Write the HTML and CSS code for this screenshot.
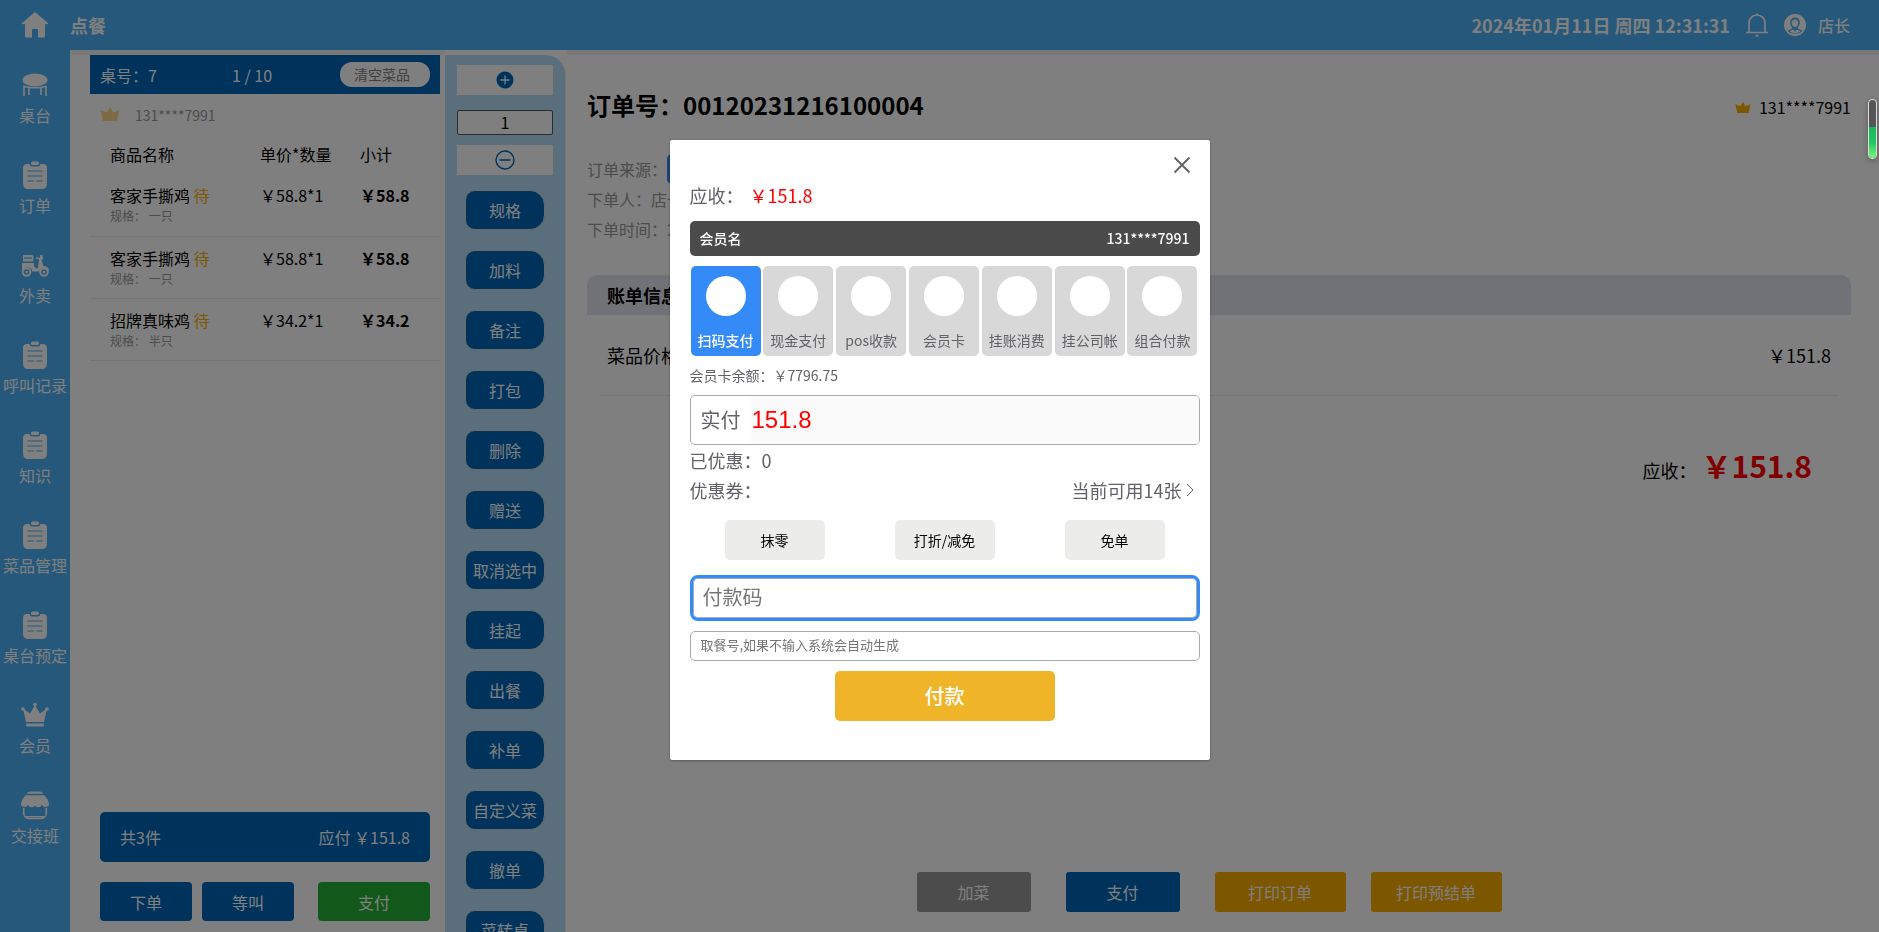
FILE: index.html
```html
<!DOCTYPE html>
<html lang="zh-CN">
<head>
<meta charset="utf-8">
<title>点餐</title>
<link rel="stylesheet" href="styles.css">
</head>
<body>
<svg class="defs" aria-hidden="true">
  <symbol id="i-clip" viewBox="0 0 30 30">
    <path fill="currentColor" d="M7 4h2.500q.5 2.500 2.500 2.500h6q2 0 2.500-2.500H23q4 0 4 4v15q0 6-5 6H8q-5 0-5-6V8q0-4 4-4z"/>
    <rect x="11" y="1.500" width="8" height="3.500" rx="1.500" fill="currentColor"/>
    <path class="cut" d="M7.500 11h15M7.500 16h15M7.500 21h6.500M16.500 21h6"/>
  </symbol>
  <symbol id="i-crown" viewBox="0 0 20 14">
    <path fill="currentColor" d="M10 0l3.200 5.500L19.500 3 17 14H3L.5 3l6.300 2.500z"/>
  </symbol>
</svg>

<div class="app">
  <header class="topbar">
    <a class="home" href="#" aria-label="首页"><svg width="28" height="28" viewBox="0 0 28 28"><path fill="currentColor" d="M14 1L.5 12.500q.5 1 3.500.5v12q0 1.500 1.500 1.500H11v-7.500q0-1 1-1h4q1 0 1 1v7.500h5.500q1.500 0 1.500-1.500V13q3 .5 3.500-.5z"/></svg></a>
    <h1 class="topbar-title">点餐</h1>
    <div class="topbar-right">
      <time class="clock">2024年01月11日 周四 12:31:31</time>
      <svg class="bell" width="24" height="24" viewBox="0 0 24 24" fill="none" stroke="currentColor" stroke-width="1.700"><path d="M4 19.500V10a8 8 0 0 1 16 0v9.500M1 19.500h22M12 2.500V.5"/><path d="M10.500 22.700h3"/></svg>
      <a class="user" href="#"><svg width="22" height="22" viewBox="0 0 22 22"><circle cx="11" cy="11" r="11" fill="currentColor"/><path class="cut-fill" d="M11 3.500c3 0 4.800 2 4.800 5 0 2-.8 3.700-2 4.700l.2 1.300 4.500 2.300c-3 4-12 4-15 0L8 14.500l.2-1.300c-1.200-1-2-2.700-2-4.700 0-3 1.800-5 4.800-5z"/><path fill="currentColor" d="M11 5.500c2.200 0 3.300 1.400 3.300 3.300 0 2.200-1.400 4.400-3.300 4.400s-3.300-2.200-3.300-4.400c0-1.900 1.100-3.300 3.300-3.300zM5.500 17l4-1.500.7 2.500.8-2.500.8 2.500.7-2.500 4 1.500c-2 2.800-9 2.800-11 0z"/></svg>店长</a>
    </div>
  </header>

  <nav class="sidebar">
    <a class="nav-item" href="#"><svg width="30" height="30" viewBox="0 0 30 30"><ellipse cx="15" cy="10" rx="12.500" ry="6.500" fill="currentColor"/><path fill="none" stroke="currentColor" stroke-width="1.600" d="M4 15.500V26M9 18v7M21 18v7M26 15.500V26M4 16.500q11 2.500 22 0"/></svg>桌台</a>
    <a class="nav-item" href="#"><svg width="30" height="30"><use href="#i-clip"/></svg>订单</a>
    <a class="nav-item" href="#"><svg width="30" height="30" viewBox="0 0 30 30"><path fill="currentColor" d="M3 5h9q1.500 0 1.500 1.500V10q0 1.500-1.500 1.500H3zM2 13h12v3q1 3 4 2l1-9h-3V7.500h4V5h2.500l.5 4-1.500 1 2 6q5 0 5.500 4.500h-2.200a4.500 4.500 0 0 0-8 1h-6.500a4.500 4.500 0 0 0-8.300-2H2z"/><path class="cut" d="M4 8h8"/><circle cx="6.500" cy="22" r="3.800" fill="none" stroke="currentColor" stroke-width="2"/><circle cx="24" cy="22" r="3.800" fill="none" stroke="currentColor" stroke-width="2"/><circle cx="6.500" cy="22" r="1.300" fill="currentColor"/><circle cx="24" cy="22" r="1.300" fill="currentColor"/></svg>外卖</a>
    <a class="nav-item" href="#"><svg width="30" height="30"><use href="#i-clip"/></svg>呼叫记录</a>
    <a class="nav-item" href="#"><svg width="30" height="30"><use href="#i-clip"/></svg>知识</a>
    <a class="nav-item" href="#"><svg width="30" height="30"><use href="#i-clip"/></svg>菜品管理</a>
    <a class="nav-item" href="#"><svg width="30" height="30"><use href="#i-clip"/></svg>桌台预定</a>
    <a class="nav-item" href="#"><svg width="30" height="30" viewBox="0 0 30 30"><g fill="currentColor"><path d="M15 5l5 8.500 7-5L24 22H6L3 8.500l7 5z"/><circle cx="15" cy="4.500" r="1.800"/><circle cx="3" cy="9" r="1.800"/><circle cx="27" cy="9" r="1.800"/><rect x="6" y="23.500" width="18" height="3" rx="1"/></g></svg>会员</a>
    <a class="nav-item" href="#"><svg width="32" height="32" viewBox="0 0 32 32"><path fill="currentColor" d="M7 4q1.500-2.500 4-2.500h10q2.500 0 4 2.500z"/><path fill="currentColor" d="M6 5.700h20q4 3.800 5 8.800.5 3.500-4 3.500-2.500 0-3.700-2-1 2.500-3.600 2.500T16 16.500q-1.100 2-3.700 2T8.700 16q-1.200 2-3.700 2-4.500 0-4-3.500 1-5 5-8.800z"/><path fill="none" stroke="currentColor" stroke-width="1.800" d="M4 19v7.500M28 19v7.500"/><path fill="none" stroke="currentColor" stroke-width="1.400" d="M4 26q1.500 4.500 6 4.500h12q4.500 0 6-4.500M6 28.500h20"/></svg>交接班</a>
  </nav>

  <section class="cart">
    <div class="cart-head">
      <span class="table-no">桌号：7</span>
      <span class="page-no">1 / 10</span>
      <button class="clear-btn" type="button">清空菜品</button>
    </div>
    <div class="cart-member"><svg width="20" height="16" viewBox="0 0 20 14"><use href="#i-crown"/></svg>131****7991</div>
    <table class="dishes">
      <thead><tr><th class="c-name">商品名称</th><th class="c-price">单价*数量</th><th class="c-sum">小计</th></tr></thead>
      <tbody>
        <tr><td>客家手撕鸡 <span class="wait">待</span><small>规格： 一只</small></td><td>￥58.8*1</td><td class="sum">￥58.8</td></tr>
        <tr><td>客家手撕鸡 <span class="wait">待</span><small>规格： 一只</small></td><td>￥58.8*1</td><td class="sum">￥58.8</td></tr>
        <tr><td>招牌真味鸡 <span class="wait">待</span><small>规格： 半只</small></td><td>￥34.2*1</td><td class="sum">￥34.2</td></tr>
      </tbody>
    </table>
    <div class="cart-foot">
      <div class="total"><span>共3件</span><span>应付 ￥151.8</span></div>
      <div class="cart-actions">
        <button type="button">下单</button>
        <button type="button">等叫</button>
        <button class="pay" type="button">支付</button>
      </div>
    </div>
  </section>

  <aside class="ops">
    <button class="step" type="button" aria-label="增加"><svg width="18" height="18" viewBox="0 0 18 18"><circle cx="9" cy="9" r="8.500" fill="currentColor"/><path stroke="#fff" stroke-width="1.300" d="M9 4.500v9M4.500 9h9"/></svg></button>
    <input class="qty" type="text" value="1" aria-label="数量">
    <button class="step" type="button" aria-label="减少"><svg width="20" height="20" viewBox="0 0 20 20" fill="none" stroke="currentColor" stroke-width="1.400"><circle cx="10" cy="10" r="9"/><path d="M4.500 10h11"/></svg></button>
    <div class="op-list">
      <button type="button">规格</button>
      <button type="button">加料</button>
      <button type="button">备注</button>
      <button type="button">打包</button>
      <button type="button">删除</button>
      <button type="button">赠送</button>
      <button type="button">取消选中</button>
      <button type="button">挂起</button>
      <button type="button">出餐</button>
      <button type="button">补单</button>
      <button type="button">自定义菜</button>
      <button type="button">撤单</button>
      <button type="button">菜转桌</button>
    </div>
  </aside>

  <main class="order">
    <div class="order-head">
      <h2>订单号：00120231216100004</h2>
      <span class="order-member"><svg width="16" height="13" viewBox="0 0 20 14"><use href="#i-crown"/></svg>131****7991</span>
    </div>
    <ul class="meta">
      <li>订单来源：<span class="tag">收银</span></li>
      <li>下单人：店长</li>
      <li>下单时间：2024-01-11</li>
    </ul>
    <h3 class="bill-head">账单信息</h3>
    <div class="bill-row"><span>菜品价格</span><span>￥151.8</span></div>
    <div class="due">应收：<strong>￥151.8</strong></div>
    <div class="order-actions">
      <button class="grey" type="button">加菜</button>
      <button class="blue" type="button">支付</button>
      <div class="prints">
        <button type="button">打印订单</button>
        <button type="button">打印预结单</button>
      </div>
    </div>
  </main>
</div>

<div class="overlay">
  <form class="dialog" role="dialog" aria-label="付款">
    <button class="close" type="button" aria-label="关闭"><svg width="18" height="18" viewBox="0 0 18 18"><path stroke="currentColor" stroke-width="1.800" d="M1.500 1.500l15 15M16.500 1.500l-15 15"/></svg></button>
    <div class="receivable">应收：<span class="red">￥151.8</span></div>
    <div class="member-bar"><span>会员名</span><span>131****7991</span></div>
    <div class="methods">
      <button class="method active" type="button"><i class="dot"></i>扫码支付</button>
      <button class="method" type="button"><i class="dot"></i>现金支付</button>
      <button class="method" type="button"><i class="dot"></i>pos收款</button>
      <button class="method" type="button"><i class="dot"></i>会员卡</button>
      <button class="method" type="button"><i class="dot"></i>挂账消费</button>
      <button class="method" type="button"><i class="dot"></i>挂公司帐</button>
      <button class="method" type="button"><i class="dot"></i>组合付款</button>
    </div>
    <div class="balance">会员卡余额：￥7796.75</div>
    <div class="paid"><label for="paid">实付</label><input id="paid" type="text" value="151.8"></div>
    <div class="line">已优惠：0</div>
    <div class="line"><span>优惠券：</span><a class="coupon" href="#">当前可用14张<svg width="8" height="14" viewBox="0 0 8 14" fill="none" stroke="currentColor"><path d="M1 1l6 6-6 6"/></svg></a></div>
    <div class="discounts">
      <button type="button">抹零</button>
      <button type="button">打折/减免</button>
      <button type="button">免单</button>
    </div>
    <input class="paycode" type="text" placeholder="付款码" aria-label="付款码">
    <input class="pickup" type="text" placeholder="取餐号,如果不输入系统会自动生成" aria-label="取餐号">
    <button class="submit" type="button">付款</button>
  </form>
</div>
<div class="meter" aria-hidden="true"><div class="meter-fill"></div></div>
</body>
</html>
```

FILE: styles.css
```css
* { box-sizing: border-box; }
body {
  margin: 0;
  font: 16px/24px "Noto Sans CJK SC", "Noto Sans", sans-serif;
  color: #000;
  overflow: hidden;
}
button, input { font: inherit; margin: 0; }
button { border: 0; padding: 0; cursor: pointer; }
a { color: inherit; text-decoration: none; }
h1, h2, h3, ul { margin: 0; padding: 0; }
svg { display: block; flex: none; }
.defs { position: absolute; width: 0; height: 0; }
.cut { fill: none; stroke: #4ab0f6; stroke-width: 1.2; }
.cut-fill { fill: #4ab0f6; }

.app {
  display: grid;
  grid-template: 50px minmax(0, 1fr) / 70px 375px 121px minmax(0, 1fr);
  height: 100vh;
  background: #fff;
}

/* top bar */
.topbar {
  grid-column: 1 / -1;
  display: flex;
  align-items: center;
  background: #4ab0f6;
  color: #fff;
}
.home { width: 70px; display: flex; justify-content: center; }
.topbar-title { font-size: 18px; line-height: 24px; }
.topbar-right { margin-left: auto; padding-right: 29px; display: flex; align-items: center; }
.clock { font-size: 18px; font-weight: 700; }
.bell { margin: 0 15px; }
.user { display: flex; align-items: center; gap: 12px; font-weight: 500; }

/* side navigation */
.sidebar { background: #4ab0f6; color: #fff; padding-top: 19px; overflow: hidden; }
.nav-item {
  height: 90px;
  display: flex;
  flex-direction: column;
  align-items: center;
  gap: 2px;
  white-space: nowrap;
}
.nav-item svg { width: 32px; height: 32px; padding: 1px; }

/* cart */
.cart {
  border-top: 5px solid #f2f2f2;
  padding: 0 5px 11px 20px;
  display: flex;
  flex-direction: column;
}
.cart-head {
  height: 39px;
  padding: 0 10px;
  display: grid;
  grid-template-columns: 1fr auto 1fr;
  align-items: center;
  background: #0066b8;
  color: #fff;
}
.page-no { padding-right: 26px; }
.clear-btn {
  justify-self: end;
  width: 90px;
  height: 25px;
  border-radius: 12px;
  background: #fff;
  color: #808080;
  font-size: 14px;
  line-height: 25px;
  padding-right: 6px;
}
.cart-member {
  height: 42px;
  padding-left: 10px;
  display: flex;
  align-items: center;
  gap: 15px;
  font-size: 14px;
  color: #999;
}
.cart-member svg { color: #fcd68c; margin-bottom: 2px; }
.dishes { width: 100%; border-collapse: collapse; table-layout: fixed; }
.dishes th { height: 38px; padding: 0 0 2px; text-align: left; font-weight: 400; }
.dishes td { height: 62px; padding: 9px 0 0; vertical-align: top; border-bottom: 1px solid #ebebeb; }
.dishes .c-name { width: 170px; }
.dishes .c-price { width: 100px; }
.dishes th:first-child, .dishes td:first-child { padding-left: 20px; }
.dishes small { display: block; font-size: 12px; line-height: 18px; color: #999; }
.dishes .sum { font-weight: 700; }
.wait { color: #faac00; }
.cart-foot { margin-top: auto; padding: 0 10px; }
.total {
  height: 50px;
  padding: 0 20px;
  display: flex;
  align-items: center;
  justify-content: space-between;
  border-radius: 5px;
  background: #0066b8;
  color: #fff;
}
.cart-actions { display: flex; gap: 10px; margin-top: 20px; }
.cart-actions button { width: 92px; height: 39px; border-radius: 4px; background: #0066b8; color: #fff; }
.cart-actions .pay { width: 112px; margin-left: auto; background: #22b034; }

/* operations column */
.ops {
  margin-top: 5px;
  padding: 10px 12px 0;
  border-right: 1px solid #f2f2f2;
  border-radius: 0 20px 0 0;
  background: #b6dcf6;
  overflow: hidden;
}
.step {
  width: 100%;
  height: 30px;
  display: flex;
  align-items: center;
  justify-content: center;
  background: #fff;
  color: #0066b8;
}
.qty {
  display: block;
  width: 100%;
  height: 25px;
  margin: 15px 0 10px;
  padding: 0 0 2px;
  border: 1px solid #555;
  border-radius: 2px;
  text-align: center;
  background: #fff;
}
.op-list { display: flex; flex-direction: column; align-items: center; gap: 20px; margin-top: 15px; }
.op-list button {
  flex: none;
  width: 80px;
  height: 40px;
  border: 1px solid #d0d4d8;
  border-radius: 10px 15px 15px 10px;
  background: #0066b8;
  color: #fff;
}

/* order details */
.order {
  border-top: 5px solid #f2f2f2;
  padding: 0 28px 20px 21px;
  display: flex;
  flex-direction: column;
}
.order-head { height: 99px; display: flex; align-items: center; justify-content: space-between; }
.order-head h2 { font-size: 24px; line-height: 36px; }
.order-member { display: flex; align-items: center; gap: 8px; margin-top: 5px; }
.order-member svg { color: #faac00; }
.meta { list-style: none; color: #999; line-height: 30px; }
.meta li { display: flex; height: 30px; }
.tag { padding: 0 10px; border-radius: 5px; background: #348bf8; color: #fff; }
.bill-head {
  margin-top: 31px;
  padding-left: 20px;
  border-radius: 10px 10px 0 0;
  background: #e3e5ef;
  font-size: 18px;
  line-height: 40px;
}
.bill-row {
  margin: 0 13px;
  padding: 0 7px;
  height: 81px;
  display: flex;
  align-items: center;
  justify-content: space-between;
  border-bottom: 1px solid #ebebeb;
  font-size: 18px;
}
.due { margin: 45px 39px 0; display: flex; align-items: baseline; justify-content: flex-end; font-size: 18px; line-height: 48px; }
.due strong { font-size: 30px; margin-left: 5px; color: #f00; }
.order-actions { display: flex; justify-content: center; gap: 35px; margin-top: auto; padding-right: 20px; }
.prints { display: flex; gap: 25px; }
.order-actions button { height: 40px; border-radius: 3px; background: #faac00; color: #fff; width: 131px; }
.order-actions .grey, .order-actions .blue { width: 114px; }
.order-actions .grey { background: #999; }
.order-actions .blue { background: #0066b8; }

/* payment dialog */
.overlay { position: fixed; inset: 0; padding-top: 15vh; background: rgba(0, 0, 0, .5); }
.dialog {
  width: 540px;
  margin: 0 auto;
  padding: 16px 10px 39px 20px;
  display: flex;
  flex-direction: column;
  border-radius: 2px;
  background: #fff;
  box-shadow: 0 1px 3px rgba(0, 0, 0, .3);
  color: #606266;
}
.close { align-self: flex-end; margin-right: 9px; background: none; color: #606266; }
.receivable { font-size: 18px; line-height: 30px; margin: 6px 0 11px; display: flex; gap: 6px; }
.red { color: #f00; }
.member-bar {
  height: 35px;
  padding: 0 10px;
  display: flex;
  align-items: center;
  justify-content: space-between;
  border-radius: 5px;
  background: #4b4b4b;
  color: #fff;
  font-size: 14px;
  font-weight: 500;
}
.methods { display: flex; justify-content: space-between; padding: 10px 2px 10px 1px; }
.method {
  width: 70px;
  height: 90px;
  padding: 10px 0 4px;
  display: flex;
  flex-direction: column;
  align-items: center;
  justify-content: space-between;
  border-radius: 5px;
  background: #d8d8d8;
  color: #606266;
  font-size: 14px;
}
.method.active { background: #348bf8; color: #fff; font-weight: 500; }
.dot { width: 40px; height: 40px; border-radius: 50%; background: #fff; }
.balance { font-size: 14px; line-height: 18px; }
.paid {
  height: 50px;
  margin-top: 11px;
  padding-left: 10px;
  display: flex;
  align-items: center;
  border: 1px solid #aaa;
  border-radius: 5px;
  font-size: 20px;
  overflow: hidden;
}
.paid label { width: 50px; }
.paid input {
  flex: 1;
  height: 100%;
  padding: 0 1px;
  border: 0;
  background: #fafafa;
  color: #f00;
  font: 24px "Liberation Sans", sans-serif;
}
.line { display: flex; justify-content: space-between; font-size: 18px; line-height: 30px; }
.coupon { display: flex; align-items: center; gap: 4px; padding-right: 6px; }
.discounts { display: flex; justify-content: space-around; padding: 15px 0; }
.discounts button { width: 100px; height: 40px; border-radius: 5px; background: #ececea; color: #000; font-size: 14px; }
.paycode {
  height: 46px;
  padding: 0 10px 2px;
  border: 3px solid #348bf8;
  border-radius: 8px;
  box-shadow: inset 0 0 0 1px #aaa;
  font-size: 20px;
  outline: 0;
}
.pickup { height: 30px; margin: 10px 0; padding: 0 10px 2px; border: 1px solid #aaa; border-radius: 5px; font-size: 13px; }
.paycode::placeholder, .pickup::placeholder { color: #757575; }
.submit {
  align-self: center;
  width: 220px;
  height: 50px;
  border-radius: 5px;
  background: #f0b429;
  color: #fff;
  font-size: 20px;
  font-weight: 500;
}

/* floating level meter */
.meter {
  position: fixed;
  top: 99px;
  right: 2px;
  width: 9px;
  height: 60px;
  padding-top: 27px;
  border: 1px solid #ddd;
  border-radius: 4px;
  background: #555;
  box-shadow: 0 2px 6px rgba(0, 0, 0, .3);
}
.meter-fill { height: 31px; border-radius: 0 0 3px 3px; background: linear-gradient(#18b85c, #22c55e 50%, #7df57d); }
```
